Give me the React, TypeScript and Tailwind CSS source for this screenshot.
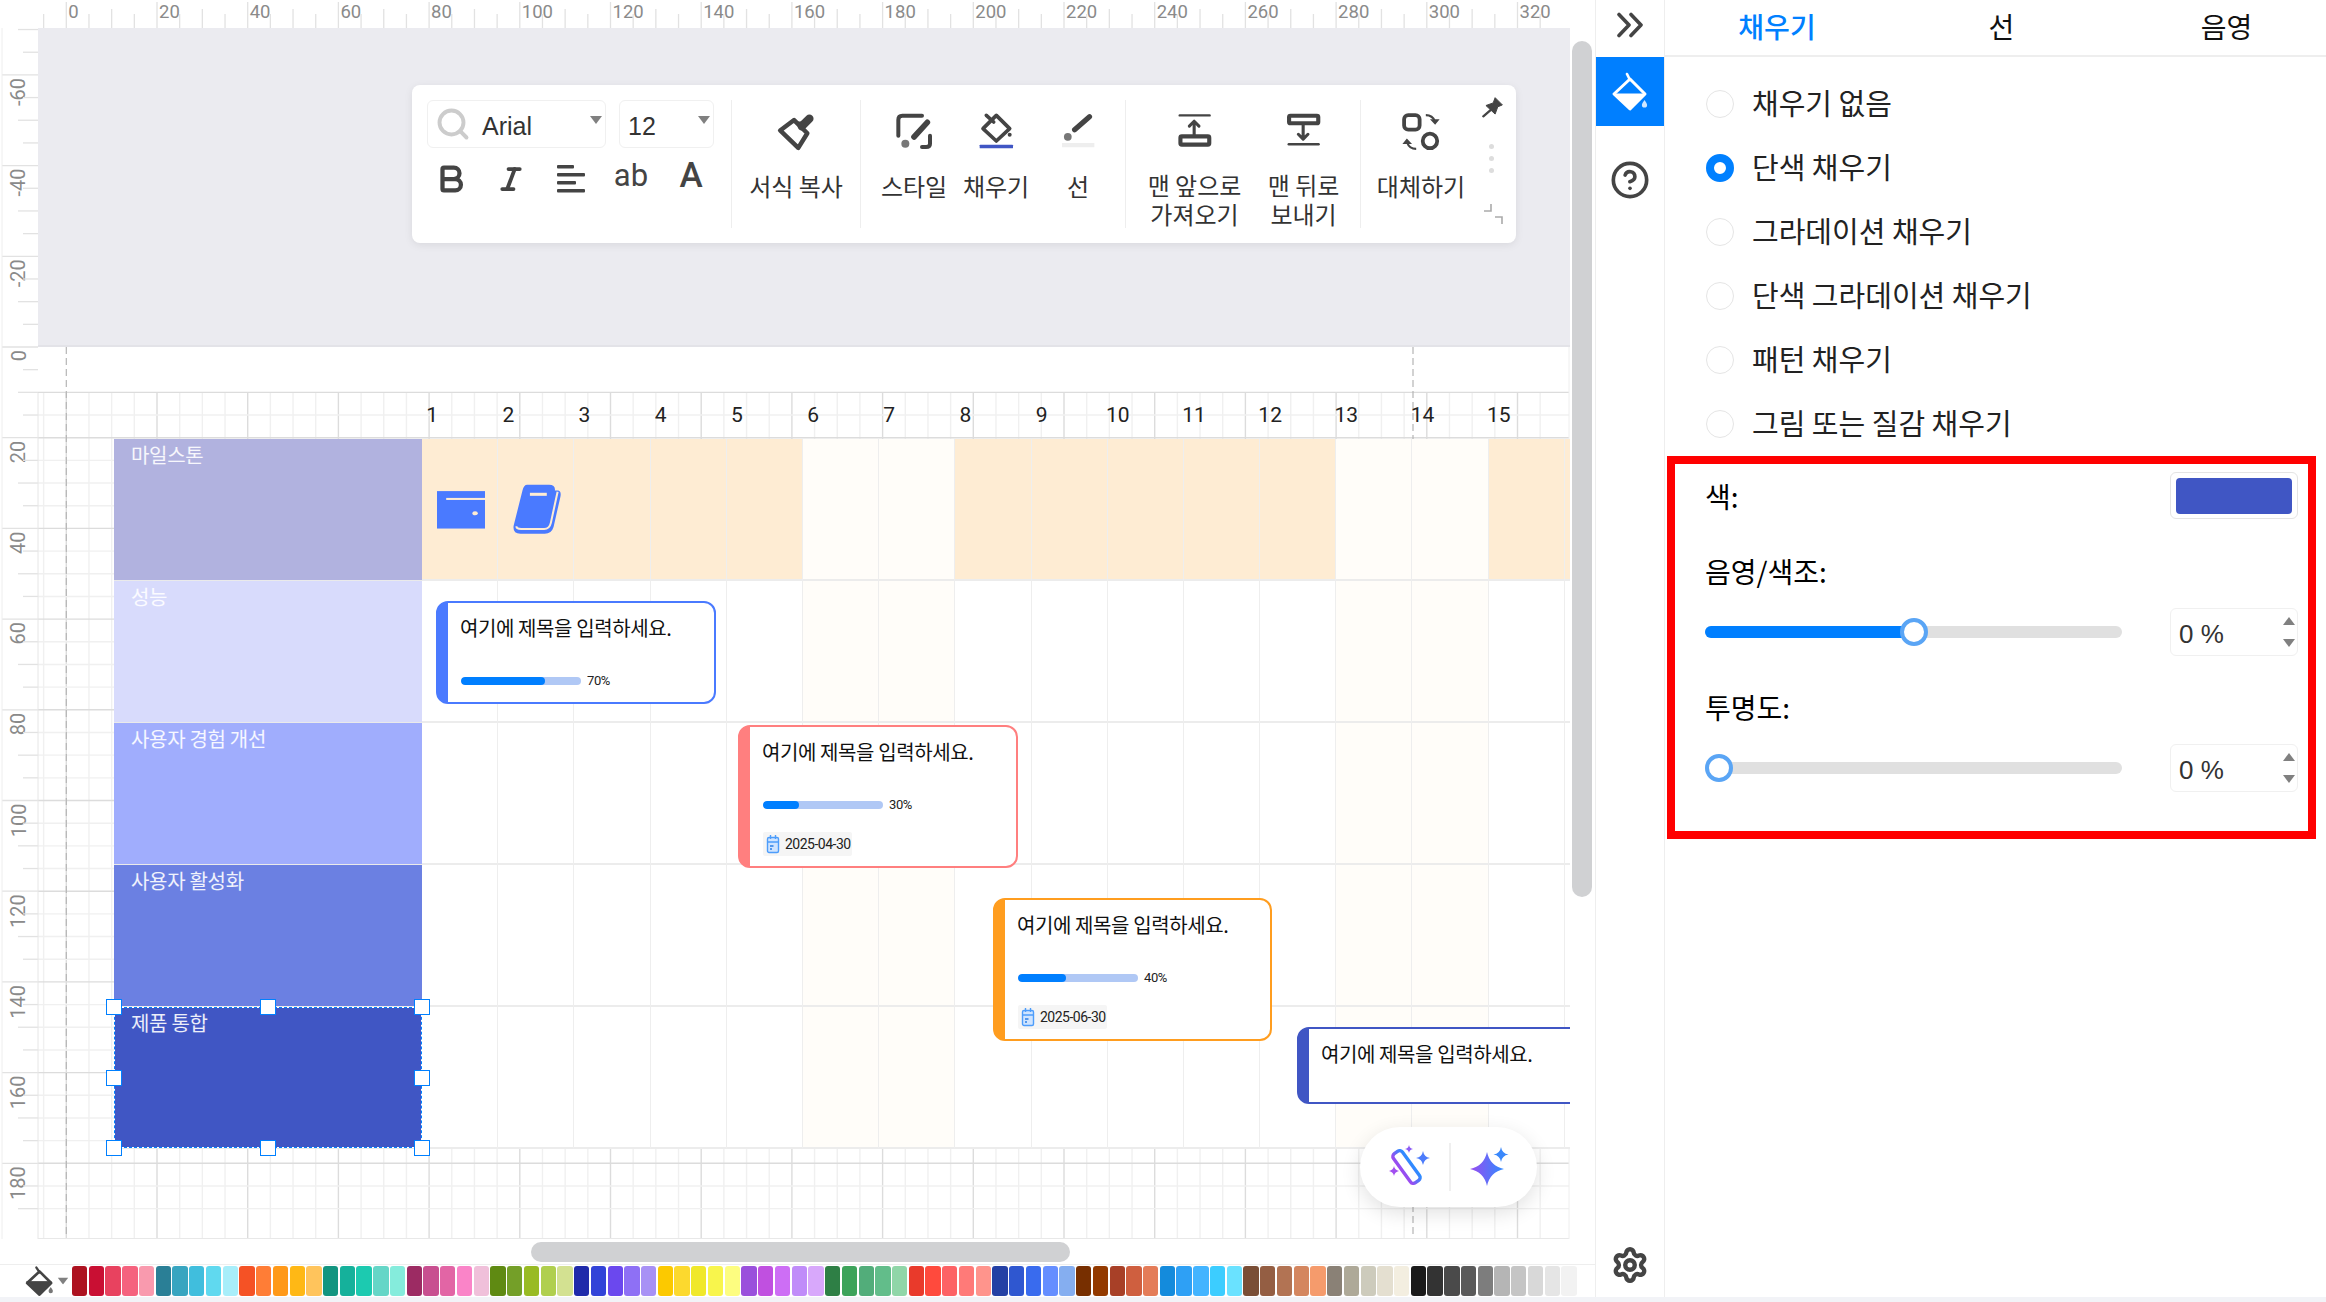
import { CircleHelp, Settings, Search, Bold, Italic } from "lucide-react";

const palette = [
  "#ad1220", "#c90f33", "#e8425f", "#f5627e", "#f99aae",
  "#2a7f96", "#38a5c0", "#40bedd", "#60d9ef", "#a8eefa",
  "#f55225", "#ff7d36", "#ff9919", "#ffb815", "#ffc45c",
  "#139580", "#15b19b", "#1ccab0", "#65d6c7", "#85ecdc",
  "#9c2b63", "#c84f90", "#e265a5", "#fa84c8", "#f0c0da",
  "#5f8a12", "#749f28", "#99bb24", "#b0cf4e", "#d3e191",
  "#1f2aaa", "#3243d8", "#6b48ee", "#8e70f5", "#a891f5",
  "#fcc900", "#fcd92e", "#f0e82a", "#f8f54c", "#fdfd80",
  "#9a50dc", "#c050e0", "#cd6ef5", "#c08cf9", "#d8a8fb",
  "#2e7f45", "#3da35a", "#52ad7a", "#62bd8a", "#90d6a8",
  "#e93a2b", "#ff4a3d", "#fd6265", "#ff7a78", "#ff948c",
  "#2440a4", "#2f57d0", "#396bee", "#658eff", "#85aef0",
  "#772f00", "#933a00", "#a84027", "#cf5f3f", "#e47c58",
  "#148bdc", "#2ea0f5", "#43b4ff", "#3ccdff", "#6ae2ff",
  "#7a4e36", "#945e43", "#b27353", "#d4865f", "#f59b6c",
  "#8a8176", "#aea998", "#cdcbbc", "#e4dfd0", "#f3eee0",
  "#1a1a1a", "#333333", "#4a4a4a", "#5a5a5a", "#7d7d7d", "#b5b5b5", "#c5c5c5", "#d8d8d8", "#e5e5e5", "#f2f2f2", "#ffffff",
];

const rows = [
  { name: "마일스톤", bg: "bg-[#b1b2df]", milestone: true },
  { name: "성능", bg: "bg-[#d8dbfc]" },
  { name: "사용자 경험 개선", bg: "bg-[#a0adfd]" },
  { name: "사용자 활성화", bg: "bg-[#6b80e2]" },
  { name: "제품 통합", bg: "bg-[#4056c4]", selected: true },
];

const fills = ["채우기 없음", "단색 채우기", "그라데이션 채우기", "단색 그라데이션 채우기", "패턴 채우기", "그림 또는 질감 채우기"];

const UNIT = 4.535;
const X0 = 66.3;
const Y0 = 347;

function RulerGrid() {
  const xs = Array.from({ length: 67 }, (_, i) => i - 1);
  const ys = Array.from({ length: 53 }, (_, i) => i - 14);
  return (
    <svg className="absolute inset-0 font-['Roboto',sans-serif]" width="1570" height="1239">
      {xs.map((i) => {
        const x = X0 + i * UNIT * 5;
        const major = i % 4 === 0;
        return (
          <g key={i}>
            <line x1={x} x2={x} y1={major ? 2 : i % 2 === 0 ? 9 : 14} y2={28} stroke="#e2e2e2" strokeWidth="1.3" />
            <line x1={x} x2={x} y1={393} y2={1239} stroke={major ? "#dcdcdc" : "#f0f0f0"} strokeWidth="1.4" />
            {major && i >= 0 && (
              <text x={x + 2} y={17.5} fontSize="18.5" fill="#8a8a8a">
                {i * 5}
              </text>
            )}
          </g>
        );
      })}
      {ys.map((i) => {
        const y = Y0 + i * UNIT * 5;
        const major = i % 4 === 0;
        return (
          <g key={i}>
            <line x1={major ? 2 : i % 2 === 0 ? 18 : 23} x2={38} y1={y} y2={y} stroke="#e2e2e2" strokeWidth="1.3" />
            {y >= 392 && <line x1={38} x2={1569} y1={y} y2={y} stroke={major || i === 2 ? "#dcdcdc" : "#f0f0f0"} strokeWidth="1.4" />}
            {major && (
              <text
                x={25.5}
                y={y + 3}
                fontSize="20"
                fill="#8a8a8a"
                textAnchor="end"
                transform={`rotate(-90 25.5 ${y + 3})`}
              >
                {i * 5}
              </text>
            )}
          </g>
        );
      })}
      <line x1="2" x2="2" y1="28" y2="1239" stroke="#eeeeee" />
      <line x1="38" x2="38" y1="393" y2="1239" stroke="#e6e6e6" />
      <line x1="66.3" x2="66.3" y1="347" y2="1239" stroke="#b5b5b5" strokeWidth="1.2" strokeDasharray="7 4" />
      <line x1="1413" x2="1413" y1="347" y2="1239" stroke="#b5b5b5" strokeWidth="1.2" strokeDasharray="7 4" />
      <line x1="38" x2="1569" y1="1238.5" y2="1238.5" stroke="#e8e8e8" />
      <line x1="1569" x2="1569" y1="347" y2="1239" stroke="#eeeeee" />
    </svg>
  );
}

function Caret({ up = false, color = "#808080" }: { up?: boolean; color?: string }) {
  return (
    <svg width="12" height="8" viewBox="0 0 12 8">
      <polygon points={up ? "6,0 12,8 0,8" : "0,0 12,0 6,8"} fill={color} strokeLinejoin="round" />
    </svg>
  );
}

function FormatPainterIcon() {
  return (
    <svg width="40" height="40" viewBox="20 36 115 115" fill="none" stroke="#444" strokeLinecap="round" strokeLinejoin="round" className="-mt-[2px]">
      <path d="M32 92 L72 62 L110 100 L84 142 Z" strokeWidth="13" fill="#fff" />
      <path d="M68 66 L106 98 L96 66 Z" fill="#444" stroke="none" />
      <path d="M116 58 L94 80" strokeWidth="24" />
    </svg>
  );
}

function StyleIcon() {
  return (
    <svg width="40" height="38" viewBox="372 40 120 114" fill="none" strokeLinecap="round">
      <path d="M385 108 V60 Q385 48 397 48 H456 M480 108 V132 Q480 142 468 142 H456" stroke="#444" strokeWidth="12" />
      <path d="M432 112 L472 68" stroke="#444" strokeWidth="17" />
      <circle cx="406" cy="132" r="12" fill="#777" />
    </svg>
  );
}

function ToolFillIcon() {
  return (
    <svg width="36" height="42" viewBox="625 36 108 124" fill="none" stroke="#444" strokeLinecap="round" strokeLinejoin="round">
      <path d="M680 48 L720 88 L680 125 L640 88 Z" strokeWidth="11" />
      <path d="M650 48 L672 68" strokeWidth="11" />
      <circle cx="720" cy="106" r="6" fill="#444" stroke="none" />
      <rect x="630" y="136" width="100" height="11" rx="2" fill="#4056c4" stroke="none" />
    </svg>
  );
}

function LineIcon() {
  return (
    <svg width="34" height="38" viewBox="870 44 105 114" fill="none" strokeLinecap="round">
      <path d="M912 94 L958 54" stroke="#444" strokeWidth="16" />
      <circle cx="891" cy="116" r="12" fill="#777" />
      <rect x="873" y="135" width="100" height="13" fill="#eeeeee" />
    </svg>
  );
}

function FrontIcon() {
  return (
    <svg width="35" height="37" viewBox="20 74 102 106" fill="none" stroke="#444" strokeLinecap="round" strokeLinejoin="round" className="-mt-[2px]">
      <path d="M28 83 H115" strokeWidth="7" />
      <path d="M70 140 V102 M56 114 L70 100 L84 114" strokeWidth="9" />
      <rect x="30" y="144" width="84" height="24" rx="4" strokeWidth="12" />
    </svg>
  );
}

function BackIcon() {
  return (
    <svg width="35" height="37" viewBox="348 80 102 106" fill="none" stroke="#444" strokeLinecap="round" strokeLinejoin="round" className="-mt-[2px]">
      <rect x="357" y="90" width="85" height="22" rx="4" strokeWidth="12" />
      <path d="M398 114 V156 M384 144 L398 158 L412 144" strokeWidth="9" />
      <path d="M356 173 H443" strokeWidth="7" />
    </svg>
  );
}

function ReplaceIcon() {
  return (
    <svg width="40" height="40" viewBox="696 70 116 114" fill="none" stroke="#444" strokeLinejoin="round">
      <rect x="705" y="78" width="45" height="42" rx="12" strokeWidth="11" />
      <circle cx="780" cy="153" r="21" strokeWidth="11" />
      <path d="M768 78 Q788 78 794 96 M740 176 Q720 176 714 158" strokeWidth="6" />
      <path d="M780 90 L808 90 L795 106 Z M700 162 L728 162 L713 146 Z" fill="#444" stroke="none" />
    </svg>
  );
}

function PinIcon() {
  return (
    <svg width="21" height="21" viewBox="938 24 64 64" className="-mt-[3px] ml-[1px]">
      <path d="M978 26 L1000 48 L986 54 L978 76 L950 50 L972 42 Z" fill="#444" stroke="#444" strokeWidth="3" strokeLinejoin="round" />
      <path d="M964 64 L942 83" stroke="#444" strokeWidth="7" strokeLinecap="round" />
    </svg>
  );
}

function AlignIcon() {
  return (
    <svg width="28" height="30" viewBox="0 0 28 30" fill="#444">
      <rect x="0" y="1" width="17" height="3.6" rx="1" />
      <rect x="0" y="9" width="28" height="3.6" rx="1" />
      <rect x="0" y="17" width="19" height="3.6" rx="1" />
      <rect x="0" y="25" width="28" height="3.6" rx="1" />
    </svg>
  );
}

function CollapseIcon() {
  return (
    <svg width="28" height="26" viewBox="0 0 28 26" fill="none" stroke="#444" strokeWidth="3.6" strokeLinecap="round" strokeLinejoin="round">
      <path d="M3 2.5 L13 13 L3 23.5 M15 2.5 L25 13 L15 23.5" />
    </svg>
  );
}

function RailFillIcon() {
  return (
    <svg width="38" height="40" viewBox="0 0 38 40" fill="none" stroke="#fff" strokeLinejoin="round" strokeLinecap="round">
      <path d="M16 2 L19 8" strokeWidth="2.6" />
      <path d="M19 7 L34 22 L19 37 L3 22 Z" strokeWidth="3" />
      <path d="M3 22 H34 L19 37 Z" fill="#fff" />
      <path d="M33.5 28 c1.4 2.4 2.6 3.6 2.6 5 a2.6 2.6 0 0 1 -5.2 0 c0 -1.4 1.2 -2.6 2.6 -5 Z" fill="#cfe6ff" stroke="none" />
    </svg>
  );
}

function PaletteFillIcon() {
  return (
    <svg width="31" height="31" viewBox="0 0 38 40" fill="none" stroke="#444" strokeLinejoin="round" strokeLinecap="round">
      <path d="M15 2 L19 8" strokeWidth="3" />
      <path d="M19 7 L34 22 L19 37 L3 22 Z" strokeWidth="3.4" />
      <path d="M3 20 H34 L19 37 Z" fill="#444" />
      <path d="M33.5 27 c1.4 2.4 2.8 3.8 2.8 5.4 a2.8 2.8 0 0 1 -5.6 0 c0 -1.6 1.4 -3 2.8 -5.4 Z" fill="#777" stroke="none" />
    </svg>
  );
}

function DrawerIcon() {
  return (
    <svg width="48" height="38" viewBox="21 37 141 111">
      <rect x="21" y="37" width="141" height="110" fill="#4a7aff" />
      <rect x="48" y="57" width="114" height="6" fill="#feecd3" />
      <ellipse cx="133" cy="102" rx="8" ry="6" fill="#feecd3" />
    </svg>
  );
}

function BookIcon() {
  return (
    <svg width="48" height="50" viewBox="248 13 142 148" className="-mt-[2px]">
      <path d="M290 15 H355 Q374 15 372 32 L382 32 Q392 34 388 52 L368 140 Q362 160 342 160 H270 Q246 160 250 136 L276 32 Q280 15 290 15 Z" fill="#4a7aff" />
      <path d="M380 36 L360 128 Q356 146 340 146 H272 Q258 146 258 138" fill="none" stroke="#feecd3" strokeWidth="6" />
      <rect x="298" y="39" width="50" height="9" fill="#feecd3" />
    </svg>
  );
}

function CalendarIcon() {
  return (
    <svg width="14" height="20" viewBox="0 0 13 20" fill="none" stroke="#4d9dfb" strokeWidth="1.4" className="shrink-0">
      <rect x="1" y="3.5" width="11" height="15" rx="1.5" fill="#cfe4ff" />
      <path d="M1 8 H12 M4 1 V5 M9 1 V5" />
      <path d="M3.5 12 H7 M3.5 15 H5.5" stroke="#2b7fe6" />
    </svg>
  );
}

function AiPill() {
  return (
    <div className="absolute left-[1360px] top-[1127px] flex h-[80px] w-[177px] items-center rounded-[40px] bg-white shadow-[0_6px_20px_rgba(0,0,0,0.12)]">
      <svg width="89" height="48" viewBox="0 0 89 48">
        <defs>
          <linearGradient id="ai" x1="0" x2="1" y1="0" y2="0">
            <stop offset="0" stopColor="#9a4cf0" />
            <stop offset="1" stopColor="#2f8bff" />
          </linearGradient>
        </defs>
        <rect x="41" y="6" width="11" height="36" rx="3.5" fill="none" stroke="url(#ai)" strokeWidth="3.4" transform="rotate(-36 46.5 24)" />
        <path d="M63 8 Q64 14 70 15 Q64 16 63 22 Q62 16 56 15 Q62 14 63 8 Z" fill="#4c7cfb" />
        <path d="M49 2 Q49.6 5.5 53 6 Q49.6 6.5 49 10 Q48.4 6.5 45 6 Q48.4 5.5 49 2 Z" fill="#8d5cf5" />
        <path d="M34 23 Q34.6 27 39 28 Q34.6 29 34 33 Q33.4 29 29 28 Q33.4 27 34 23 Z" fill="#a24ff0" />
      </svg>
      <div className="h-[48px] w-[2px] bg-[#efefef]" />
      <svg width="60" height="56" viewBox="0 0 60 56" className="ml-[14px]">
        <path d="M22 13 Q25 27 39 30 Q25 33 22 47 Q19 33 5 30 Q19 27 22 13 Z" fill="url(#ai)" />
        <path d="M36 8 Q37 14.5 43.5 15.5 Q37 16.5 36 23 Q35 16.5 28.5 15.5 Q35 14.5 36 8 Z" fill="#3a88fb" />
      </svg>
    </div>
  );
}

function Handle({ pos }: { pos: string }) {
  return <div className={`absolute h-4 w-4 -translate-x-1/2 -translate-y-1/2 border-[1.5px] border-[#0080ff] bg-white ${pos}`} />;
}

function Card({
  className,
  color,
  value,
  date,
}: {
  className: string;
  color: string;
  value: number;
  date?: string;
}) {
  return (
    <div className={`absolute rounded-[12px] border-2 border-l-[12px] bg-white pl-[13px] pt-[10px] ${color} ${className}`}>
      <div className="-ml-[1px] text-[20px] leading-[30px] tracking-[-0.4px] text-[#111]">여기에 제목을 입력하세요.</div>
      {value > 0 && (
        <div className="mt-[34px] flex h-2 items-center gap-[6px]">
          <div className="h-2 w-[120px] overflow-hidden rounded-full bg-[#b0c8f5]">
            <div className="h-full rounded-full bg-[#007fff]" style={{ width: `${value}%` }} />
          </div>
          <span className="font-['Roboto',sans-serif] text-[13px] tracking-[-0.4px] text-[#222]">{value}%</span>
        </div>
      )}
      {date && (
        <div className="mt-[23px] flex h-6 w-[89px] items-center gap-[5px] rounded-[2px] bg-[#f5f5f5] pl-[3px]">
          <CalendarIcon />
          <span className="font-['Roboto',sans-serif] text-[14px] tracking-[-0.5px] text-[#222]">{date}</span>
        </div>
      )}
    </div>
  );
}

function Gantt() {
  const days = Array.from({ length: 16 }, (_, i) => i);
  return (
    <div className="relative ml-[76px]">
      {rows.map((row) => (
        <div key={row.name} className="flex h-[142px]">
          <div className={`relative w-[308px] shrink-0 border-b border-[#eaeaea] pl-[17px] pt-[1px] text-[20px] leading-[30px] tracking-[-0.3px] text-white/90 ${row.bg}`}>
            {row.name}
            {row.selected && (
              <>
                <div className="absolute inset-0 border-[1.5px] border-white" />
                <div className="absolute inset-0 border-[1.5px] border-dashed border-[#0080ff]" />
                <Handle pos="left-0 top-0" />
                <Handle pos="left-1/2 top-0" />
                <Handle pos="left-full top-0" />
                <Handle pos="left-0 top-1/2" />
                <Handle pos="left-full top-1/2" />
                <Handle pos="left-0 top-full" />
                <Handle pos="left-1/2 top-full" />
                <Handle pos="left-full top-full" />
              </>
            )}
          </div>
          {days.map((d) => {
            const weekend = d === 5 || d === 6 || d === 12 || d === 13;
            return (
              <div
                key={d}
                className={`h-full w-[76.2px] shrink-0 border-b-2 border-r border-b-[#ececec] border-r-[#eeeeee] ${
                  weekend ? "bg-[#fffdf9]" : row.milestone ? "bg-[#feecd3]" : "bg-white"
                }`}
              />
            );
          })}
        </div>
      ))}
      <div className="absolute left-[323px] top-[47px] flex items-center gap-[28px]">
        <DrawerIcon />
        <BookIcon />
      </div>
      <Card className="left-[322px] top-[162px] h-[103px] w-[280px]" color="border-[#4a7aff]" value={70} />
      <Card className="left-[624px] top-[286px] h-[143px] w-[280px]" color="border-[#ff7f7f]" value={30} date="2025-04-30" />
      <Card className="left-[879px] top-[459px] h-[143px] w-[279px]" color="border-[#ff9d1f]" value={40} date="2025-06-30" />
      <Card className="left-[1183px] top-[588px] h-[77px] w-[400px]" color="border-[#4056c4]" value={0} />
    </div>
  );
}

function Tool({ icon, label, className }: { icon: React.ReactNode; label: React.ReactNode; className: string }) {
  return (
    <div className={`flex flex-col items-center ${className}`}>
      <div className="flex h-[64px] items-center">{icon}</div>
      <div className="mt-[7px] whitespace-nowrap text-center text-[24px] leading-[29px] text-[#333]">{label}</div>
    </div>
  );
}

function Toolbar() {
  return (
    <div className="absolute left-[412px] top-[85px] flex h-[158px] w-[1104px] rounded-[8px] bg-white pt-[15px] shadow-[0_2px_8px_rgba(0,0,0,0.08)]">
      <div className="h-[128px] w-[320px] shrink-0 border-r border-[#eeeeee] pl-[15px]">
        <div className="flex gap-[13px]">
          <div className="flex h-[48px] w-[179px] items-center rounded-[6px] border border-[#f0f0f0] pl-[7px] pr-[3px]">
            <Search size={36} strokeWidth={2.6} color="#cccccc" />
            <span className="ml-[11px] pt-[5px] font-['Liberation_Sans',sans-serif] text-[25px] text-[#333]">Arial</span>
            <div className="mb-2 ml-auto">
              <Caret />
            </div>
          </div>
          <div className="flex h-[48px] w-[95px] items-center rounded-[6px] border border-[#f0f0f0] pl-[8px] pr-[3px]">
            <span className="pt-[5px] font-['Liberation_Sans',sans-serif] text-[25px] text-[#333]">12</span>
            <div className="mb-2 ml-auto">
              <Caret />
            </div>
          </div>
        </div>
        <div className="-ml-[6px] mt-[7px] flex h-[48px] items-center font-['Roboto',sans-serif] text-[#444]">
          <div className="flex w-[60px] justify-center">
            <Bold size={34} strokeWidth={3} />
          </div>
          <div className="flex w-[60px] justify-center">
            <Italic size={30} strokeWidth={3} />
          </div>
          <div className="flex w-[60px] justify-center">
            <AlignIcon />
          </div>
          <div className="flex w-[60px] justify-center pb-[8px] text-[31px] leading-none">ab</div>
          <div className="flex w-[60px] justify-center pb-[8px] text-[35px] font-medium leading-none">A</div>
        </div>
      </div>
      <div className="h-[128px] w-[129px] shrink-0 border-r border-[#eeeeee]">
        <Tool icon={<FormatPainterIcon />} label="서식 복사" className="w-full" />
      </div>
      <div className="flex h-[128px] w-[265px] shrink-0 border-r border-[#eeeeee] pl-[12px]">
        <Tool icon={<StyleIcon />} label="스타일" className="w-[82px]" />
        <Tool icon={<ToolFillIcon />} label="채우기" className="w-[82px]" />
        <Tool icon={<LineIcon />} label="선" className="w-[82px]" />
      </div>
      <div className="flex h-[128px] w-[235px] shrink-0 border-r border-[#eeeeee] pl-[14px]">
        <Tool icon={<FrontIcon />} label={<>맨 앞으로<br />가져오기</>} className="w-[109px]" />
        <Tool icon={<BackIcon />} label={<>맨 뒤로<br />보내기</>} className="w-[109px]" />
      </div>
      <Tool icon={<ReplaceIcon />} label="대체하기" className="w-[120px] shrink-0" />
      <div className="flex w-[35px] flex-col">
        <PinIcon />
        <div className="ml-[8px] mt-[26px] flex flex-col gap-[7px]">
          <div className="h-[5px] w-[5px] rounded-full bg-[#dddddd]" />
          <div className="h-[5px] w-[5px] rounded-full bg-[#dddddd]" />
          <div className="h-[5px] w-[5px] rounded-full bg-[#dddddd]" />
        </div>
        <svg width="22" height="22" viewBox="0 0 22 22" fill="none" stroke="#aaaaaa" strokeWidth="1.6" className="ml-[1px] mt-[30px]">
          <path d="M9 1 V8 H2 M20 21 V14 H13" />
        </svg>
      </div>
    </div>
  );
}

function Stage() {
  const labels = Array.from({ length: 15 }, (_, i) => i + 1);
  return (
    <div className="relative h-[1239px] w-[1570px] shrink-0 overflow-hidden bg-white">
      <RulerGrid />
      <div className="relative flex h-full flex-col pl-[38px] pt-[28px]">
        <div className="h-[319px] shrink-0 border-b-2 border-[#e3e3e8] bg-[#ebebf0]" />
        <div className="h-[46px] shrink-0" />
        <div className="flex h-[46px] shrink-0 items-center pl-[356px] font-['Roboto',sans-serif] text-[21px] text-[#222]">
          {labels.map((n) => (
            <div key={n} className="w-[76.2px] shrink-0 text-center">
              {n}
            </div>
          ))}
        </div>
        <Gantt />
      </div>
      <Toolbar />
      <AiPill />
    </div>
  );
}

function Slider({ fill, thumb }: { fill: string; thumb: string }) {
  return (
    <div className="relative h-3 w-[417px] rounded-full bg-[#e0e0e0]">
      <div className={`h-full rounded-full bg-[#007fff] ${fill}`} />
      <div className={`absolute top-1/2 h-7 w-7 -translate-y-1/2 rounded-full border-4 border-[#5aa5f5] bg-white ${thumb}`} />
    </div>
  );
}

function PercentInput() {
  return (
    <div className="flex h-12 w-[128px] items-center justify-between rounded-[6px] border border-[#f0f0f0] pl-[8px] pr-[2px]">
      <span className="pt-[5px] font-['Liberation_Sans',sans-serif] text-[26px] text-[#333]">0 %</span>
      <div className="flex flex-col gap-[14px]">
        <Caret up />
        <Caret />
      </div>
    </div>
  );
}

function Panel() {
  return (
    <div className="w-[661px] shrink-0 overflow-hidden bg-white">
      <div className="flex h-[57px] border-b-2 border-[#eeeeee] text-[28px] text-[#111]">
        <div className="w-[224px] shrink-0 pt-[5px] text-center font-medium text-[#0080ff]">채우기</div>
        <div className="w-[225px] shrink-0 pt-[5px] text-center">선</div>
        <div className="w-[225px] shrink-0 pt-[5px] text-center">음영</div>
      </div>
      <div className="pl-[41px] pt-[15px]">
        {fills.map((f, i) => (
          <div key={f} className="flex h-16 items-center">
            {i === 1 ? (
              <div className="h-7 w-7 rounded-full border-[8px] border-[#0080ff] bg-white" />
            ) : (
              <div className="h-7 w-7 rounded-full border border-[#e5e5e5] bg-white" />
            )}
            <span className="ml-[18px] pb-[3px] text-[29px] leading-none text-[#222]">{f}</span>
          </div>
        ))}
      </div>
      <div className="ml-[2px] h-[383px] w-[649px] border-8 border-[#ff0000] pl-[30px] pr-[10px] pt-[8px] text-[28px] text-black">
        <div className="flex h-[47px] items-center justify-between">
          <span>색:</span>
          <div className="flex h-[47px] w-[128px] items-center justify-center rounded-[6px] border-[1.5px] border-[#e4e4e4]">
            <div className="h-[36px] w-[116px] rounded-[4px] bg-[#4056c4]" />
          </div>
        </div>
        <div className="mt-[32px] leading-[40px]">음영/색조:</div>
        <div className="mt-[17px] flex items-center justify-between">
          <Slider fill="w-[208px]" thumb="left-[195px]" />
          <PercentInput />
        </div>
        <div className="mt-[31px] leading-[40px]">투명도:</div>
        <div className="mt-[17px] flex items-center justify-between">
          <Slider fill="w-0" thumb="left-0" />
          <PercentInput />
        </div>
      </div>
    </div>
  );
}

export default function App() {
  return (
    <div className="flex h-[1302px] w-[2326px] flex-col overflow-hidden bg-white font-['Noto_Sans_CJK_KR','Noto_Sans_CJK_SC',sans-serif]">
      <div className="flex h-[1297px] shrink-0">
        <div className="flex w-[1595px] shrink-0 flex-col">
          <div className="flex h-[1239px] shrink-0">
            <Stage />
            <div className="w-[25px] pl-[2px] pt-[41px]">
              <div className="h-[856px] w-5 rounded-full bg-[#d0d1d3]" />
            </div>
          </div>
          <div className="h-[25px] shrink-0 pl-[531px] pt-[3px]">
            <div className="h-5 w-[539px] rounded-full bg-[#d0d1d3]" />
          </div>
          <div className="flex h-[33px] shrink-0 items-center overflow-hidden border-t border-[#eeeeee]">
            <div className="flex w-[72px] shrink-0 items-center pl-[24px]">
              <PaletteFillIcon />
              <div className="ml-[2px] scale-90">
                <Caret />
              </div>
            </div>
            <div className="flex gap-[1.44px]">
              {palette.map((c, i) => (
                <div key={i} className="h-[30px] w-[15.3px] shrink-0 rounded-[3px]" style={{ backgroundColor: c }} />
              ))}
            </div>
          </div>
        </div>
        <div className="flex w-[70px] shrink-0 flex-col items-center border-x border-[#eeeeee] bg-white pb-[13px]">
          <div className="flex h-[57px] items-center pb-[7px]">
            <CollapseIcon />
          </div>
          <div className="flex h-[69px] w-full items-center justify-center bg-[#007fff]">
            <RailFillIcon />
          </div>
          <div className="flex h-[108px] items-center">
            <CircleHelp size={40} strokeWidth={2.2} color="#444" />
          </div>
          <Settings size={38} strokeWidth={2.8} color="#444" className="mt-auto" />
        </div>
        <Panel />
      </div>
      <div className="h-[5px] bg-[#f2f3f7]" />
    </div>
  );
}
